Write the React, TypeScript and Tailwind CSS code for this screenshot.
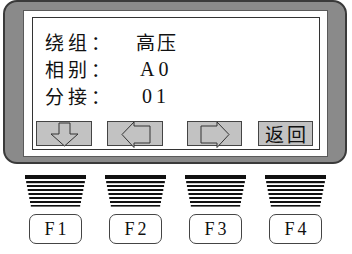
import React from 'react';

const CJK = "font-['Noto_Sans_CJK_SC',sans-serif]";
const SERIF = "font-['Liberation_Serif','Noto_Sans_CJK_SC',serif]";

const rows = [
    { label: '绕组：', value: '高压', valueClass: `${CJK} ml-0 tracking-[2px]` },
    { label: '相别：', value: 'A0', valueClass: `${SERIF} ml-[4px] text-[20px] tracking-[4px]` },
    { label: '分接：', value: '01', valueClass: `${SERIF} ml-[6px] text-[20px] tracking-[4px]` },
];

const DownArrow = () => (
    <svg width="56" height="25" viewBox="0 0 56 25" className="overflow-visible">
        <polygon points="22,1 33,1 33,12 41,12 27.5,24 14,12 22,12" fill="#c2c2c2" stroke="#333" strokeWidth="1" />
    </svg>
);

const LeftArrow = () => (
    <svg width="56" height="25" viewBox="0 0 56 25" className="overflow-visible">
        <polygon points="14,12.5 26,0 26,4 42,4 42,21 26,21 26,25.5" fill="#c2c2c2" stroke="#333" strokeWidth="1" />
    </svg>
);

const RightArrow = () => (
    <svg width="55" height="25" viewBox="0 0 55 25" className="overflow-visible">
        <polygon points="41,12.5 29,0 29,4 13,4 13,21 29,21 29,25.5" fill="#c2c2c2" stroke="#333" strokeWidth="1" />
    </svg>
);

// key grille: black stripes narrowing downwards
const stripes: [number, number][] = [
    [0, 4], [6, 2.2], [10, 2], [14, 2], [18, 2], [22, 2], [26, 2], [30, 1.6],
];

const Grille = () => (
    <svg width="61" height="32" viewBox="0 0 61 32">
        {stripes.map(([y, h], i) => {
            const inset = (y / 31) * 6;
            return <rect key={i} x={inset} y={y} width={61 - inset * 2} height={h} fill="#111" />;
        })}
    </svg>
);

export default function App() {
    return (
        <div className="w-[352px] h-[254px] bg-white overflow-hidden text-[#111]">
            {/* Bezel */}
            <div className="ml-[3px] w-[344px] h-[164px] rounded-[14px] border-2 border-[#3a3a3a] bg-[#8a8a8a] pl-[18px] pt-[8px]">
                <div className="w-[305px] h-[147px] bg-white border border-[#5a5a5a] pl-[8px] pt-[6px]">
                    <div className="w-[288px] h-[133px] border border-[#333] flex flex-col">
                        {/* Info rows */}
                        <div className="pl-[12px] pt-[10px]">
                            {rows.map((row) => (
                                <div key={row.label} className="flex items-center h-[27px] text-[19px] leading-none">
                                    <span className={`${CJK} w-[91px] tracking-[4px]`}>{row.label}</span>
                                    <span className={row.valueClass}>{row.value}</span>
                                </div>
                            ))}
                        </div>

                        {/* Soft buttons */}
                        <div className="flex mt-[12px]">
                            <div className="ml-[3px] w-[56px] h-[25px] bg-[#c2c2c2] border border-[#444] flex">
                                <DownArrow />
                            </div>
                            <div className="ml-[15px] w-[56px] h-[25px] bg-[#c2c2c2] border border-[#444] flex">
                                <LeftArrow />
                            </div>
                            <div className="ml-[24px] w-[55px] h-[25px] bg-[#c2c2c2] border border-[#444] flex">
                                <RightArrow />
                            </div>
                            <div className={`ml-[16px] w-[55px] h-[25px] bg-[#c2c2c2] border border-[#444] flex items-center justify-center text-[19px] leading-none tracking-[3px] pl-[3px] ${CJK}`}>
                                返回
                            </div>
                        </div>
                    </div>
                </div>
            </div>

            {/* Function keys */}
            <div className="flex ml-[25px] mt-[11px] gap-[19px]">
                {['F1', 'F2', 'F3', 'F4'].map((key) => (
                    <div key={key} className="w-[61px] flex flex-col items-center">
                        <Grille />
                        <div className={`mt-[7px] w-[53px] h-[30px] rounded-[7px] border border-[#444] flex items-center justify-center text-[18px] leading-none tracking-[3px] pl-[3px] ${SERIF}`}>
                            {key}
                        </div>
                    </div>
                ))}
            </div>
        </div>
    );
}
